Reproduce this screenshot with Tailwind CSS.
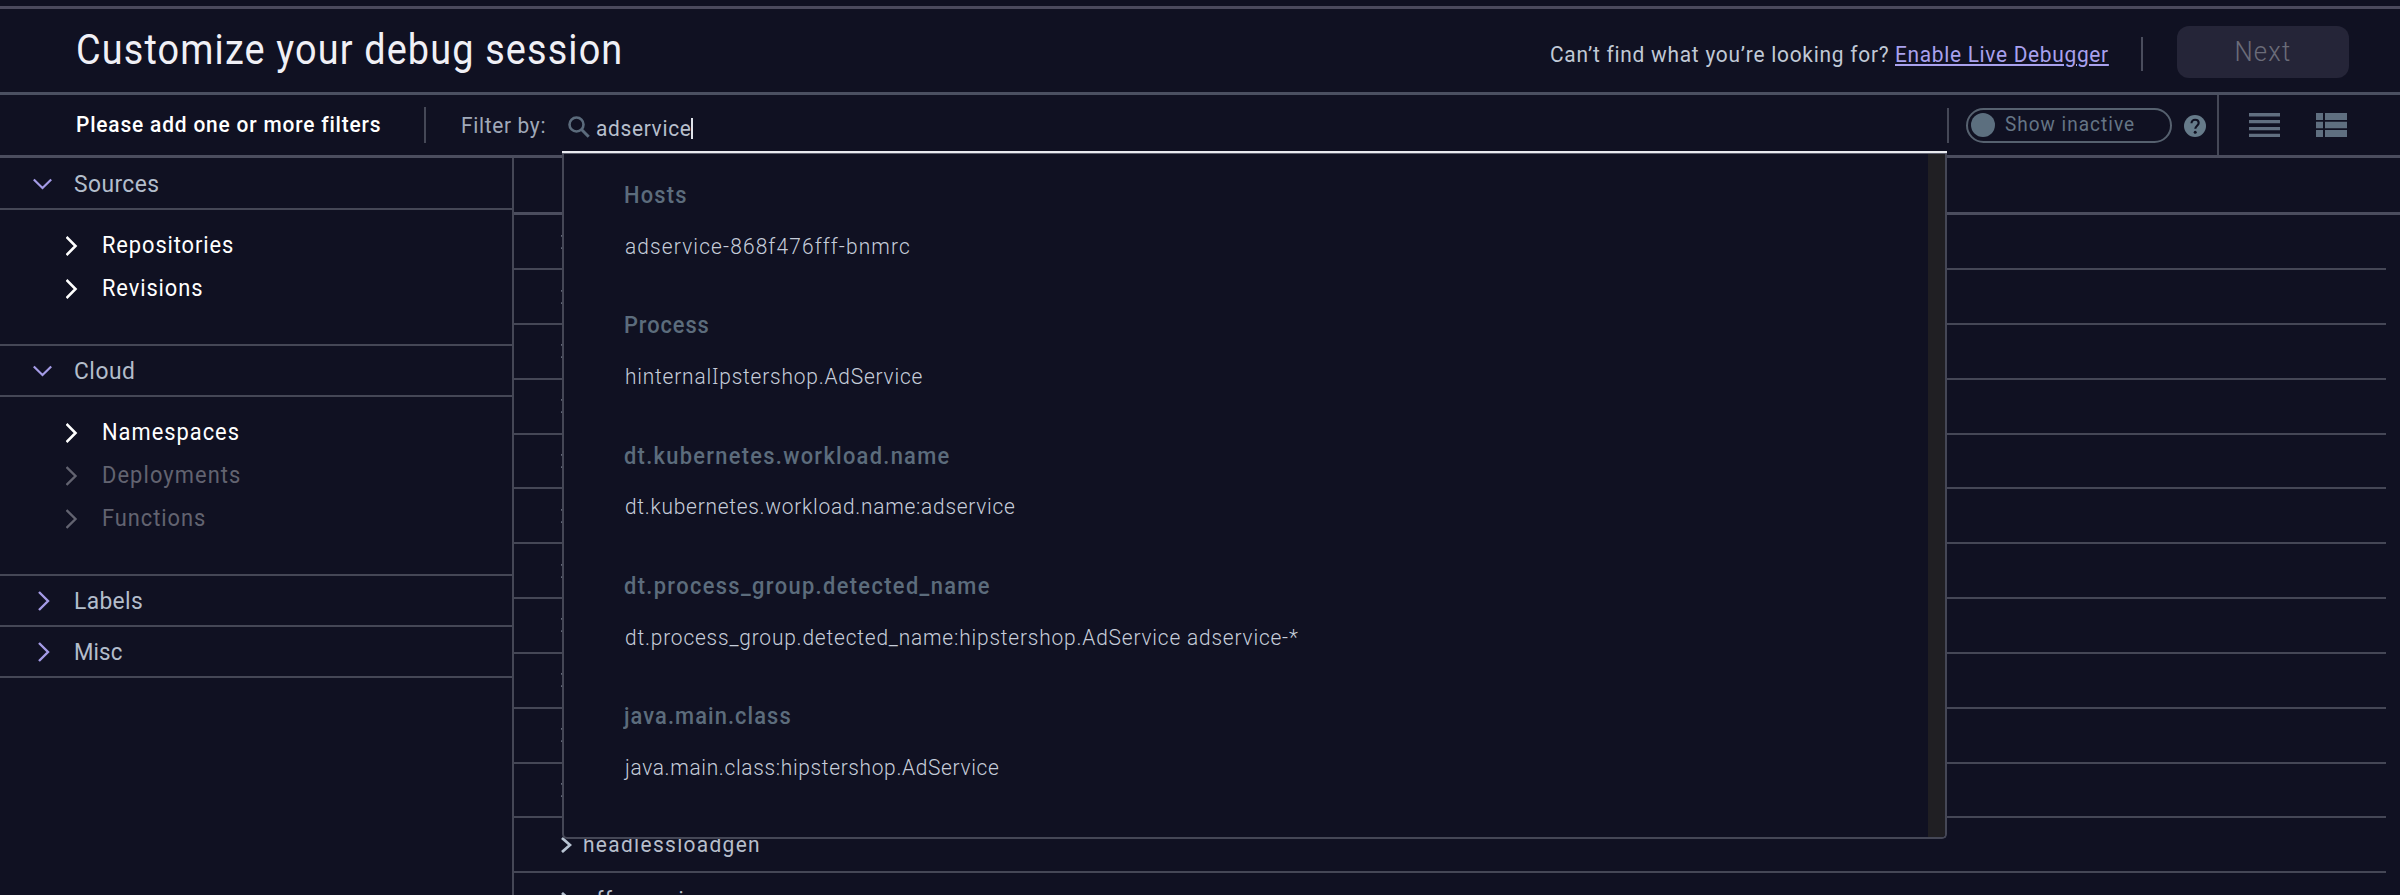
<!DOCTYPE html>
<html lang="en">
<head>
<meta charset="utf-8">
<title>Customize your debug session</title>
<script src="https://cdn.jsdelivr.net/npm/@tailwindcss/browser@4"></script>
</head>
<body class="relative h-[895px] w-[2400px] overflow-hidden bg-[#101122] font-['Roboto',sans-serif] text-[22px] whitespace-nowrap text-[#b7bfcc]">
<div class="flex h-full flex-col">
  <div class="h-[6px] shrink-0"></div>
  <header class="flex h-[89px] shrink-0 items-center border-t-3 border-b-3 border-t-[#4b4a5d] border-b-[#4b5061] pr-[51px] pl-[76px]">
    <h1 class="mb-[3px] w-[700px]"><span class="inline-block origin-left scale-x-90 text-[42px] tracking-[1.28px] text-[#f0f0f6]">Customize your debug session</span></h1>
    <div class="ml-auto flex items-center">
      <div class="mt-[7px] w-[345px] text-[#c0c9d6]"><span class="inline-block origin-left scale-x-95 tracking-[0.79px]">Can’t find what you’re looking for?</span></div>
      <a class="mt-[7px] w-[214px] text-[#a9a1ee]"><span class="inline-block origin-left scale-x-95 tracking-[0.72px] underline decoration-2 underline-offset-2">Enable Live Debugger</span></a>
      <div class="mt-[7px] ml-[32px] h-[34px] w-[2px] bg-[#4a4d5d]"></div>
      <button class="mt-[3px] ml-[34px] flex h-[52px] w-[172px] items-center justify-center rounded-xl bg-[#252538] text-[27px] font-light text-[#6b6c79]"><span class="inline-block scale-x-95 tracking-[1.2px]">Next</span></button>
    </div>
  </header>
  <div class="flex h-[63px] shrink-0 items-center border-b-3 border-[#4b4d5e] pl-[76px]">
    <div class="mb-[2px] w-[348px] font-medium text-white"><span class="inline-block origin-left scale-x-95 tracking-[0.87px]">Please add one or more filters</span></div>
    <div class="h-[36px] w-[2px] bg-[#454857]"></div>
    <div class="mt-[1px] ml-[35px] w-[107px] text-[#a0a9b9]"><span class="inline-block origin-left scale-x-95 tracking-[0.7px]">Filter by:</span></div>
    <svg class="mt-[4px] h-[22px] w-[22px]" viewBox="0 0 22 22" fill="none" stroke="#5b6b7c"><circle cx="8.5" cy="8.5" r="7" stroke-width="2.6"/><path d="M13.5 13.5L20.7 20.7" stroke-width="3"/></svg>
    <div class="mt-[7px] ml-[6px] w-[95px]"><span class="inline-block origin-left scale-x-95 tracking-[0.70px]">adservice</span></div>
    <div class="mt-[7px] h-[21px] w-[1.5px] bg-[#dfe3ea]"></div>
    <div class="mr-[17px] ml-auto h-[35px] w-[2px] bg-[#454857]"></div>
    <div class="flex h-[35px] w-[206px] items-center rounded-full border-2 border-[#56616f] pl-[3px]">
      <div class="h-[24px] w-[24px] shrink-0 rounded-full bg-[#5c6f7f]"></div>
      <div class="-mt-[2px] ml-[10px] text-[20px] text-[#657585]"><span class="inline-block origin-left scale-x-95 tracking-[1.06px]">Show inactive</span></div>
    </div>
    <svg class="mt-[2px] ml-[12px] h-[22px] w-[22px]" viewBox="0 0 22 22" fill="none"><circle cx="11" cy="11" r="11" fill="#667b8a"/><path d="M7.5 8.3C7.5 6 9 4.7 11.1 4.7S14.7 6 14.7 8C14.7 10.6 11.3 10.8 11.3 13.8" stroke="#101122" stroke-width="2.1"/><circle cx="11.2" cy="17.2" r="1.5" fill="#101122"/></svg>
    <div class="ml-[11px] h-full w-[2px] bg-[#454857]"></div>
    <svg class="ml-[30px] h-[24px] w-[31px]" viewBox="0 0 31 24" fill="#616f80"><path d="M0 0h31v3.4H0zM0 7h31v3.3H0zM0 13.9h31v3.3H0zM0 20.7h31V24H0z"/></svg>
    <svg class="mr-[53px] ml-[36px] h-[24px] w-[31px]" viewBox="0 0 31 24" fill="#5f6f80"><path d="M0 0h7v7H0zM9 0h22v7H9zM0 8.7h7v6.6H0zM9 8.7h22v6.6H9zM0 17h7v7H0zM9 17h22v7H9z"/></svg>
  </div>
  <div class="flex min-h-0 flex-1">
    <aside class="w-[514px] shrink-0 border-r-2 border-[#454756] text-[24px] text-[#b3bdcb]">
      <div class="flex h-[52px] items-center border-b-2 border-[#454756] pt-[2px] pl-[33px]">
        <svg class="mr-[22px] h-[12px] w-[19px]" viewBox="0 0 19 12" fill="none" stroke="#a49be6" stroke-width="2.2"><path d="M.8 1.5L9.5 10L18.2 1.5"/></svg>
        <span class="inline-block origin-left scale-x-95 tracking-[0.45px]">Sources</span>
      </div>
      <div class="h-[134px] pt-[15px] text-[23px] text-white">
        <div class="flex h-[43px] items-center pl-[66px]"><svg class="mr-[24px] mb-[2px] h-[20px] w-[12px]" viewBox="0 0 12 20" fill="none" stroke="currentColor" stroke-width="2.6"><path d="M.5 1L9.5 10L.5 19"/></svg><span class="inline-block origin-left scale-x-95 tracking-[0.95px]">Repositories</span></div>
        <div class="flex h-[43px] items-center pl-[66px]"><svg class="mr-[24px] mb-[2px] h-[20px] w-[12px]" viewBox="0 0 12 20" fill="none" stroke="currentColor" stroke-width="2.6"><path d="M.5 1L9.5 10L.5 19"/></svg><span class="inline-block origin-left scale-x-95 tracking-[0.95px]">Revisions</span></div>
      </div>
      <div class="flex h-[53px] items-center border-y-2 border-[#454756] pl-[33px]">
        <svg class="mr-[22px] h-[12px] w-[19px]" viewBox="0 0 19 12" fill="none" stroke="#a49be6" stroke-width="2.2"><path d="M.8 1.5L9.5 10L18.2 1.5"/></svg>
        <span class="inline-block origin-left scale-x-95 tracking-[0.55px]">Cloud</span>
      </div>
      <div class="h-[177px] pt-[15px] text-[23px] text-white">
        <div class="flex h-[43px] items-center pl-[66px]"><svg class="mr-[24px] mb-[2px] h-[20px] w-[12px]" viewBox="0 0 12 20" fill="none" stroke="currentColor" stroke-width="2.6"><path d="M.5 1L9.5 10L.5 19"/></svg><span class="inline-block origin-left scale-x-95 tracking-[1.05px]">Namespaces</span></div>
        <div class="flex h-[43px] items-center pl-[66px] text-[#626370]"><svg class="mr-[24px] mb-[2px] h-[20px] w-[12px]" viewBox="0 0 12 20" fill="none" stroke="currentColor" stroke-width="2.4"><path d="M.5 1L9.5 10L.5 19"/></svg><span class="inline-block origin-left scale-x-95 tracking-[1.15px]">Deployments</span></div>
        <div class="flex h-[43px] items-center pl-[66px] text-[#626370]"><svg class="mr-[24px] mb-[2px] h-[20px] w-[12px]" viewBox="0 0 12 20" fill="none" stroke="currentColor" stroke-width="2.4"><path d="M.5 1L9.5 10L.5 19"/></svg><span class="inline-block origin-left scale-x-95 tracking-[1.0px]">Functions</span></div>
      </div>
      <div class="flex h-[53px] items-center border-y-2 border-[#454756] pl-[38px]">
        <svg class="mr-[24px] h-[20px] w-[12px]" viewBox="0 0 12 20" fill="none" stroke="#a49be6" stroke-width="2.4"><path d="M1 1L10 10L1 19"/></svg>
        <span class="inline-block origin-left scale-x-95 tracking-[0.4px]">Labels</span>
      </div>
      <div class="flex h-[51px] items-center border-b-2 border-[#454756] pl-[38px]">
        <svg class="mr-[24px] h-[20px] w-[12px]" viewBox="0 0 12 20" fill="none" stroke="#a49be6" stroke-width="2.4"><path d="M1 1L10 10L1 19"/></svg>
        <span class="inline-block origin-left scale-x-93 tracking-[0.1px]">Misc</span>
      </div>
    </aside>
    <main class="min-w-0 flex-1">
      <div class="h-[57px] border-b-3 border-[#4b4d5e]"></div>
      <div id="rows" class="w-[1872px] pt-[0.4px]"></div>
    </main>
  </div>
</div>

<!-- Autocomplete panel -->
<section class="absolute top-[151px] left-[562px] h-[688px] w-[1385px] rounded-b-[5px] border-x-2 border-b-2 border-[#454756] bg-[#101122] pt-[20px] pl-[60px]">
  <div class="absolute top-[3px] right-0 bottom-0 w-[17px] rounded-br-[3px] bg-[#201f23]"></div>
  <div class="absolute top-0 -right-[2px] -left-[2px] h-[3px] border-b border-[#5d5f6e] bg-[#e9eaef]"></div>
  <div id="groups"></div>
</section>
<script>
const rows = ["", "", "", "", "", "", "", "", "", "", "", "headlessloadgen", "offerservice"];
document.getElementById('rows').innerHTML = rows.map((name) =>
  `<div class="flex h-[54.82px] items-center border-b-2 border-[#454756] pl-[46.7px]"><svg class="mr-[11.8px] h-[16px] w-[11px]" viewBox="0 0 11 16" fill="none" stroke="#b7c3d2" stroke-width="2.8"><path d="M1 1L9 8L1 15"/></svg>${name && `<span class="inline-block origin-left scale-x-95 tracking-[1.40px]">${name}</span>`}</div>`).join('');
const groups = [
  ["Hosts", "tracking-[1.25px]", "adservice-868f476fff-bnmrc", "tracking-[1.20px]"],
  ["Process", "tracking-[0.95px]", `hinternal<span class="font-['Noto_Sans']">I</span>pstershop.AdService`, "tracking-[0.85px]"],
  ["dt.kubernetes.workload.name", "tracking-[1.36px]", "dt.kubernetes.workload.name:adservice", "tracking-[0.78px]"],
  ["dt.process_group.detected_name", "tracking-[1.43px]", "dt.process_group.detected_name:hipstershop.AdService adservice-*", "tracking-[0.86px]"],
  ["java.main.class", "tracking-[1.14px]", "java.main.class:hipstershop.AdService", "tracking-[0.70px]"]];
document.getElementById('groups').innerHTML = groups.map(([h, a, v, b]) =>
  `<div class="h-[130.4px]"><div class="flex h-[50px] items-center text-[23px] font-medium text-[#5c6c7c]"><span class="inline-block origin-left scale-x-95 ${a}">${h}</span></div><div class="flex h-[50px] items-center pl-[0.5px] font-light text-[#c6cdda]"><span class="inline-block origin-left scale-x-95 ${b}">${v}</span></div></div>`).join('');
</script>
</body>
</html>
